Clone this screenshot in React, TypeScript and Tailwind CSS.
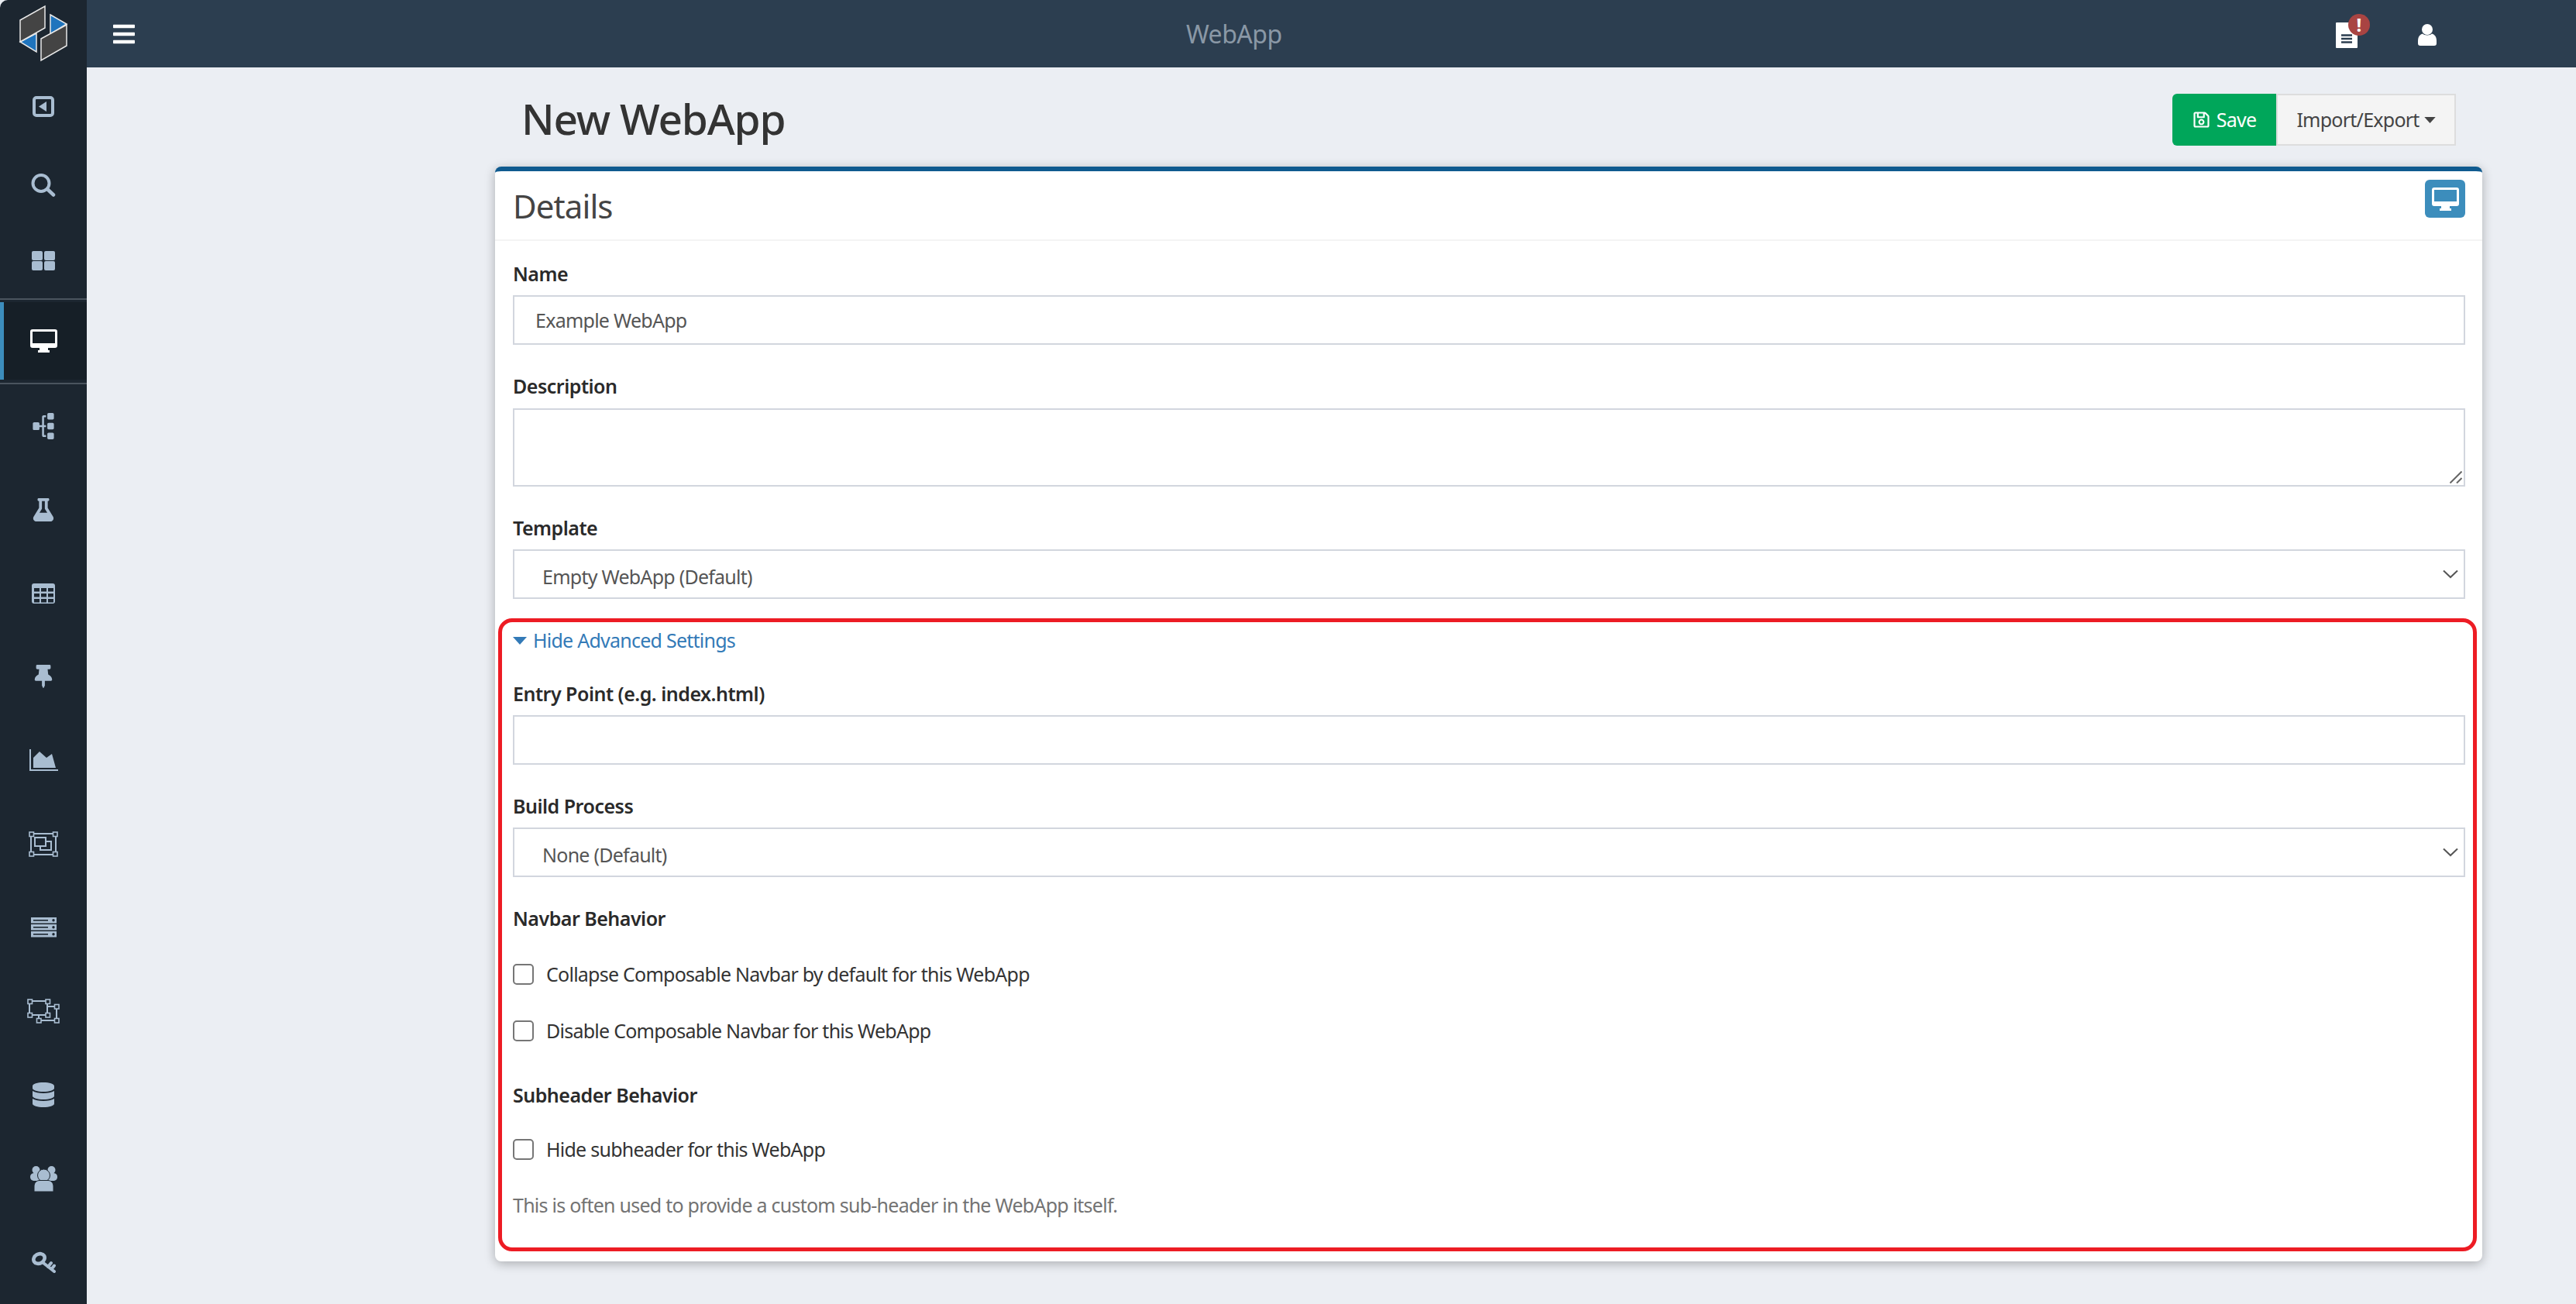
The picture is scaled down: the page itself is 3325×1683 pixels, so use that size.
import { ReactNode } from "react";
import { FaBars, FaDatabase, FaFlask, FaRegSave, FaSitemap, FaThumbtack } from "react-icons/fa";

const font = "font-['Noto_Sans',sans-serif]";

function Logo() {
  return (
    <svg viewBox="0 0 112 87" className="w-[112px] h-[87px]">
      <polygon points="65,19 86,31 65,44" fill="#1f74bd" stroke="#e8e8e8" strokeWidth="1.5" />
      <polygon points="26,54 47,43 47,67" fill="#1f74bd" stroke="#e8e8e8" strokeWidth="1.5" />
      <polygon points="26,26 58,8 58,36 26,54" fill="#444444" stroke="#e8e8e8" strokeWidth="1.5" />
      <polygon points="53,50 86,32 86,59 53,78" fill="#444444" stroke="#e8e8e8" strokeWidth="1.5" />
    </svg>
  );
}

function BackIcon() {
  return (
    <svg viewBox="0 0 28 27" className="w-[28px] h-[27px]">
      <rect x="2" y="2" width="24" height="23" rx="3" fill="none" stroke="currentColor" strokeWidth="4" />
      <polygon points="18,7 18,20 8,13.5" fill="currentColor" />
    </svg>
  );
}

function SearchIcon() {
  return (
    <svg viewBox="0 0 32 30" className="w-[32px] h-[30px]">
      <circle cx="13" cy="12.5" r="10.5" fill="none" stroke="currentColor" strokeWidth="4" />
      <path d="M21 20 L29 27.5" stroke="currentColor" strokeWidth="4.5" strokeLinecap="round" />
    </svg>
  );
}

function GridIcon() {
  return (
    <svg viewBox="0 0 30 25" className="w-[30px] h-[25px]" fill="currentColor">
      <rect x="0" y="0" width="14" height="12" rx="2" />
      <rect x="16" y="0" width="14" height="12" rx="2" />
      <rect x="0" y="13" width="14" height="12" rx="2" />
      <rect x="16" y="13" width="14" height="12" rx="2" />
    </svg>
  );
}

function DesktopIcon({ className }: { className: string }) {
  return (
    <svg viewBox="0 0 35 30" className={className} fill="currentColor">
      <path
        fillRule="evenodd"
        d="M3 0 H32 A3 3 0 0 1 35 3 V21 A3 3 0 0 1 32 24 H3 A3 3 0 0 1 0 21 V3 A3 3 0 0 1 3 0 Z M3 3 V18 H32 V3 Z"
      />
      <path d="M12 24 H23 V27 H25 V30 H10 V27 H12 Z" />
    </svg>
  );
}

function TableIcon() {
  return (
    <svg viewBox="0 0 30 26" className="w-[30px] h-[26px]">
      <rect width="30" height="26" rx="3" fill="currentColor" />
      <g fill="#1c2630">
        {[3, 12, 21].map((x) =>
          [6, 13, 20].map((y) => <rect key={`${x}-${y}`} x={x} y={y} width="7" height="4.5" />)
        )}
      </g>
    </svg>
  );
}

function ChartIcon() {
  return (
    <svg viewBox="0 0 37 28" className="w-[37px] h-[28px]" fill="currentColor">
      <path d="M0 0 H2 V26 H37 V28 H0 Z" />
      <path d="M5 24 V11 L13 3 L22 11 L29 6 L34 24 Z" />
    </svg>
  );
}

function Handle({ x, y }: { x: number; y: number }) {
  return <rect x={x} y={y} width="5.5" height="5.5" fill="#1c2630" stroke="currentColor" strokeWidth="1.6" />;
}

function GroupIcon() {
  return (
    <svg viewBox="0 0 38 33" className="w-[38px] h-[33px]" fill="none" stroke="currentColor" strokeWidth="2">
      <rect x="3" y="3" width="32" height="27" />
      <rect x="8" y="8" width="14" height="11" />
      <path d="M22 13 H29 V24 H15 V19" />
      <Handle x={1} y={1} />
      <Handle x={31.5} y={1} />
      <Handle x={1} y={26.5} />
      <Handle x={31.5} y={26.5} />
    </svg>
  );
}

function UngroupIcon() {
  return (
    <svg viewBox="0 0 42 32" className="w-[42px] h-[32px]" fill="none" stroke="currentColor" strokeWidth="2">
      <rect x="3" y="3" width="23" height="18" />
      <path d="M27 10 H38 V28 H15 V22" />
      <Handle x={1} y={1} />
      <Handle x={24} y={1} />
      <Handle x={1} y={18.5} />
      <Handle x={24} y={18.5} />
      <Handle x={35.5} y={7.5} />
      <Handle x={35.5} y={25.5} />
      <Handle x={12.5} y={25.5} />
    </svg>
  );
}

function ServerIcon() {
  return (
    <svg viewBox="0 0 33 26" className="w-[33px] h-[26px]">
      {[0, 9, 18].map((y) => (
        <g key={y}>
          <rect y={y} width="33" height="7.5" fill="currentColor" />
          <rect x="3" y={y + 3} width="19" height="1.6" fill="#1c2630" />
          <circle cx="29" cy={y + 3.7} r="1.7" fill="#1c2630" />
        </g>
      ))}
    </svg>
  );
}

function UsersIcon() {
  return (
    <svg viewBox="0 0 35 33" className="w-[35px] h-[33px]">
      <circle cx="7.5" cy="5" r="5" fill="currentColor" />
      <circle cx="27.5" cy="5" r="5" fill="currentColor" />
      <path d="M0 14 C0 10 3 9 6 9 H29 C32 9 35 10 35 14 C35 17 33 19 29 19 H6 C2 19 0 17 0 14 Z" fill="currentColor" />
      <circle cx="17.5" cy="12" r="8" fill="currentColor" stroke="#1c2630" strokeWidth="1" />
      <path d="M5 33 V26 C5 21 9 18.5 12 18.5 H23 C26 18.5 30 21 30 26 V33 Z" fill="currentColor" stroke="#1c2630" strokeWidth="1" />
    </svg>
  );
}

function KeyIcon() {
  return (
    <svg viewBox="0 0 31 28" className="w-[31px] h-[28px]" fill="none" stroke="currentColor">
      <ellipse cx="9.5" cy="9.5" rx="7.5" ry="6" strokeWidth="4.6" transform="rotate(-30 9.5 9.5)" />
      <path d="M15 15 L29 26 M21 20 L25 15 M25.5 23 L29 18.5" strokeWidth="4" strokeLinecap="round" />
    </svg>
  );
}

function UserIcon() {
  return (
    <svg viewBox="0 0 24 28" className="w-[24px] h-[28px]" fill="currentColor">
      <circle cx="12" cy="7" r="7" />
      <path d="M6 12.5 C8 15 16 15 18 12.5 C22 13.5 24 17 24 22 V25 A3 3 0 0 1 21 28 H3 A3 3 0 0 1 0 25 V22 C0 17 2 13.5 6 12.5 Z" />
    </svg>
  );
}

function LogIcon() {
  return (
    <svg viewBox="0 0 28 33" className="w-[28px] h-[33px]">
      <path d="M1 0 H27 A1 1 0 0 1 28 1 V32 A1 1 0 0 1 27 33 H1 A1 1 0 0 1 0 32 V1 A1 1 0 0 1 1 0 Z" fill="#ffffff" />
      <path d="M7 16.5 H21 M7 21 H21 M7 25.5 H21" stroke="#2c3e50" strokeWidth="2.4" />
    </svg>
  );
}

function Caret({ className }: { className: string }) {
  return (
    <svg viewBox="0 0 18 10" className={className} fill="currentColor">
      <polygon points="0,0 18,0 9,10" />
    </svg>
  );
}

function NavItem({ children, h = "h-[108px]" }: { children: ReactNode; h?: string }) {
  return <div className={`${h} flex items-center justify-center text-[#a9bdd1]`}>{children}</div>;
}

function Sidebar() {
  return (
    <aside className="w-[112px] shrink-0 h-[1683px] overflow-hidden bg-[#1c2630] rounded-tl-[10px] flex flex-col">
      <Logo />
      <NavItem h="h-[102px]"><BackIcon /></NavItem>
      <NavItem h="h-[100px]"><SearchIcon /></NavItem>
      <NavItem h="h-[95px]"><GridIcon /></NavItem>
      <div className="mt-[1px] h-[2px] bg-[#4a545e]" />
      <div className="mt-[3px] h-[100px] bg-[#161f27] border-l-[5px] border-[#3c8dbc] pr-[5px] flex items-center justify-center text-white">
        <DesktopIcon className="w-[35px] h-[30px]" />
      </div>
      <div className="mt-[4px] h-[2px] bg-[#4a545e]" />
      <NavItem><FaSitemap className="text-[34px] -rotate-90" /></NavItem>
      <NavItem><FaFlask className="text-[30px]" /></NavItem>
      <NavItem><TableIcon /></NavItem>
      <NavItem><FaThumbtack className="text-[30px]" /></NavItem>
      <NavItem><ChartIcon /></NavItem>
      <NavItem><GroupIcon /></NavItem>
      <NavItem><ServerIcon /></NavItem>
      <NavItem><UngroupIcon /></NavItem>
      <NavItem><FaDatabase className="text-[32px]" /></NavItem>
      <NavItem><UsersIcon /></NavItem>
      <NavItem><KeyIcon /></NavItem>
    </aside>
  );
}

function Topbar() {
  return (
    <header className="relative h-[87px] bg-[#2c3e50] flex items-center pl-[32px] text-white">
      <FaBars className="text-[32px]" />
      <span className="ml-[1355px] text-[32px] tracking-[-0.5px] text-[#8a98a6]">WebApp</span>
      <div className="relative ml-auto mr-[78px] mt-[4px]">
        <LogIcon />
        <span className="absolute -top-[11px] left-[16px] w-[28px] h-[28px] rounded-full bg-[#a94442] flex items-center justify-center text-[24px] leading-none font-bold">!</span>
      </div>
      <div className="mr-[180px] mt-[2px]">
        <UserIcon />
      </div>
    </header>
  );
}

function Field({ label, children }: { label: string; children: ReactNode }) {
  return (
    <div className="mb-[35px]">
      <label className="block h-[36px] mb-[10px] text-[25px] leading-[36px] tracking-[-0.5px] font-semibold text-[#2a2a2a]">{label}</label>
      {children}
    </div>
  );
}

function TextInput({ value = "" }: { value?: string }) {
  return (
    <input
      readOnly
      value={value}
      className="block w-full h-[64px] px-[27px] bg-white border-2 border-[#d2d6de] text-[25px] tracking-[-0.75px] text-[#555555] outline-none"
    />
  );
}

function SelectBox({ value }: { value: string }) {
  return (
    <div className="relative">
      <select className="block w-full h-[64px] pl-[36px] pt-[8px] bg-white border-2 border-[#d2d6de] text-[25px] tracking-[-0.75px] text-[#555555] outline-none appearance-none">
        <option>{value}</option>
      </select>
      <svg viewBox="0 0 20 12" className="absolute right-[9px] top-[26px] w-[20px] h-[12px] text-[#555555]">
        <path d="M1 1.5 L10 10 L19 1.5" fill="none" stroke="currentColor" strokeWidth="2" />
      </svg>
    </div>
  );
}

function Check({ label, className = "" }: { label: string; className?: string }) {
  return (
    <label className={`flex items-center h-[37px] text-[25px] tracking-[-0.75px] text-[#333333] ${className}`}>
      <input type="checkbox" className="appearance-none w-[27px] h-[27px] mr-[16px] bg-white border-2 border-[#767676] rounded-[5px]" />
      {label}
    </label>
  );
}

export default function App() {
  return (
    <div className={`${font} flex w-[3325px] h-[1683px] overflow-hidden bg-[#ebeef3]`}>
      <Sidebar />
      <div className="flex-1 min-w-0">
        <Topbar />
        <main className="ml-[527px] w-[2565px]">
          <div className="h-[128px] flex items-start justify-between pl-[34px] pr-[34px]">
            <h1 className="mt-[28px] text-[55px] leading-[76px] tracking-[-1.2px] font-medium text-[#333333]">New WebApp</h1>
            <div className="mt-[34px] flex h-[67px] text-[25px] tracking-[-0.75px]">
              <button className="w-[134px] bg-[#00a65a] text-white rounded-l-[6px] flex items-center justify-center gap-[8px]">
                <FaRegSave className="text-[23px]" />
                Save
              </button>
              <button className="w-[232px] bg-[#f4f4f4] border-2 border-[#dddddd] text-[#444444] flex items-center justify-center gap-[6px]">
                Import/Export
                <Caret className="w-[15px] h-[8px]" />
              </button>
            </div>
          </div>
          <section className="h-[1413px] bg-white rounded-[8px] border-t-[6px] border-[#0f5a8f] shadow-[0_3px_14px_rgba(0,0,0,0.28)]">
            <div className="h-[90px] pl-[23px] pr-[22px] pt-[11px] flex items-start justify-between border-b-2 border-[#f4f4f4]">
              <h2 className="mt-[6px] text-[42px] leading-[56px] tracking-[-0.9px] font-normal text-[#444444]">Details</h2>
              <span className="w-[52px] h-[49px] bg-[#3c8dbc] rounded-[6px] flex items-center justify-center text-white">
                <DesktopIcon className="w-[35px] h-[30px]" />
              </span>
            </div>
            <div className="pt-[24px] pl-[23px] pr-[22px]">
              <Field label="Name">
                <TextInput value="Example WebApp" />
              </Field>
              <Field label="Description">
                <div className="relative mt-[11px]">
                  <textarea readOnly className="block w-full h-[101px] bg-white border-2 border-[#d2d6de] outline-none resize-none" />
                  <svg viewBox="0 0 16 16" className="absolute right-[4px] bottom-[4px] w-[16px] h-[16px] text-[#666666]">
                    <path d="M0.5 15.5 L15.5 0.5 M9 15.5 L15.5 9" fill="none" stroke="currentColor" strokeWidth="2" />
                  </svg>
                </div>
              </Field>
              <div className="-mb-[10px]">
                <Field label="Template">
                  <SelectBox value="Empty WebApp (Default)" />
                </Field>
              </div>
              <div className="-ml-[19px] -mr-[15px] h-[817px] pl-[14px] pr-[10px] border-[5px] border-[#ed1c24] rounded-[18px]">
                <a className="flex items-center h-[48px] mb-[26px] text-[25px] tracking-[-0.75px] text-[#337ab7]">
                  <Caret className="w-[18px] h-[10px] mr-[8px]" />
                  Hide Advanced Settings
                </a>
                <Field label="Entry Point (e.g. index.html)">
                  <TextInput />
                </Field>
                <Field label="Build Process">
                  <SelectBox value="None (Default)" />
                </Field>
                <div className="mt-[2px] h-[36px] mb-[36px] text-[25px] leading-[36px] tracking-[-0.5px] font-semibold text-[#2a2a2a]">Navbar Behavior</div>
                <Check label="Collapse Composable Navbar by default for this WebApp" className="mb-[36px]" />
                <Check label="Disable Composable Navbar for this WebApp" className="mb-[46px]" />
                <div className="h-[36px] mb-[34px] text-[25px] leading-[36px] tracking-[-0.5px] font-semibold text-[#2a2a2a]">Subheader Behavior</div>
                <Check label="Hide subheader for this WebApp" className="mb-[35px]" />
                <p className="text-[25px] leading-[36px] tracking-[-0.75px] text-[#737373]">This is often used to provide a custom sub-header in the WebApp itself.</p>
              </div>
            </div>
          </section>
        </main>
      </div>
    </div>
  );
}
